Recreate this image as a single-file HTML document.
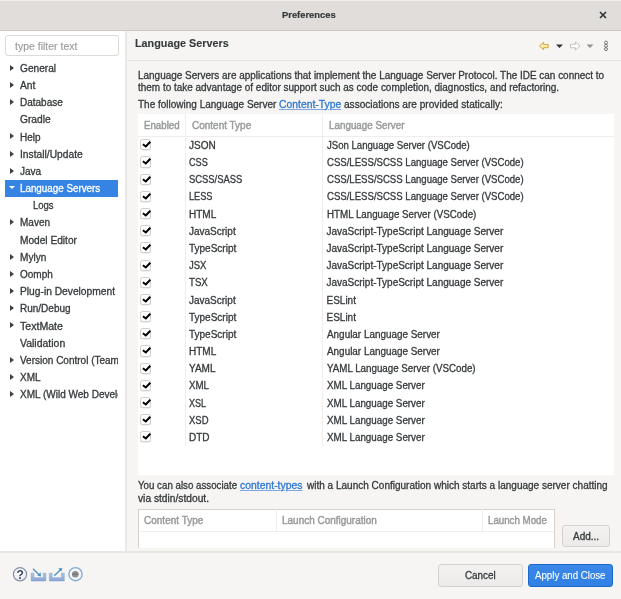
<!DOCTYPE html>
<html><head><meta charset="utf-8">
<style>
html,body{margin:0;padding:0;}
body{width:621px;height:599px;overflow:hidden;position:relative;background:#f6f5f4;
 font-family:"Liberation Sans",sans-serif;font-size:10px;color:#363a3c;will-change:transform;}
.a{position:absolute;}
.t{position:absolute;white-space:nowrap;line-height:11px;-webkit-text-stroke:0.3px currentColor;}
.g{color:#999b9c;-webkit-text-stroke:0.45px currentColor !important;}
.lnk{color:#2f78d2;text-decoration:underline;text-decoration-color:#7fa9e0;}
.tri{position:absolute;width:0;height:0;border-top:3.2px solid transparent;border-bottom:3.2px solid transparent;border-left:4px solid #3e4142;}
.cb{position:absolute;width:11.3px;height:11.1px;border:1px solid #d3cec9;border-radius:2.5px;background:#fff;box-sizing:border-box;box-shadow:0 0.5px 0 #e2dfdc;}
.cb svg{position:absolute;left:0;top:0;}
</style></head><body>
<div class="a" style="left:0;top:0;width:621px;height:31px;background:#e0ddda;border-top:1px solid #f0efed;border-bottom:1px solid #cdc8c3;box-sizing:border-box;"></div>
<div class="t" style="left:282px;top:9px;font-weight:bold;font-size:9.4px;-webkit-text-stroke:0.2px currentColor;">Preferences</div>
<svg class="a" style="left:599px;top:11px" width="8" height="8" viewBox="0 0 8 8"><path d="M1 1L7 7M7 1L1 7" stroke="#2e3436" stroke-width="1.6"/></svg>
<div class="a" style="left:0;top:31px;width:125px;height:519.6px;background:#fff;"></div>
<div class="a" style="left:125px;top:31px;width:2px;height:519.6px;background:#ebe9e7;"></div>
<div class="a" style="left:4.75px;top:35px;width:114px;height:21.2px;border:1.5px solid #dedad6;border-radius:3px;background:#fff;box-sizing:border-box;"></div>
<div class="t " style="left:15px;top:40.50px;color:#9c9c9c;-webkit-text-stroke:0.15px currentColor;transform:scaleX(1.0494);transform-origin:0 0;">type filter text</div>
<div class="a" style="left:0;top:30px;width:118px;height:521px;overflow:hidden;">
<div class="t " style="left:20px;top:32.80px;transform:scaleX(1.0148);transform-origin:0 0;">General</div>
<div class="tri" style="left:9.9px;top:34.60px;"></div>
<div class="t " style="left:20px;top:49.98px;transform:scaleX(1.0260);transform-origin:0 0;">Ant</div>
<div class="tri" style="left:9.9px;top:51.78px;"></div>
<div class="t " style="left:20px;top:67.16px;">Database</div>
<div class="tri" style="left:9.9px;top:68.96px;"></div>
<div class="t " style="left:20px;top:84.34px;transform:scaleX(1.0229);transform-origin:0 0;">Gradle</div>
<div class="t " style="left:20px;top:101.52px;">Help</div>
<div class="tri" style="left:9.9px;top:103.32px;"></div>
<div class="t " style="left:20px;top:118.70px;transform:scaleX(1.0255);transform-origin:0 0;">Install/Update</div>
<div class="tri" style="left:9.9px;top:120.50px;"></div>
<div class="t " style="left:20px;top:135.88px;">Java</div>
<div class="tri" style="left:9.9px;top:137.68px;"></div>
<div class="a" style="left:5px;top:150px;width:113.5px;height:17px;background:#3584e4;"></div>
<div class="t " style="left:20px;top:153.06px;color:#fff;transform:scaleX(0.9814);transform-origin:0 0;">Language Servers</div>
<div class="a" style="left:8.6px;top:155.86px;width:0;height:0;border-left:3.2px solid transparent;border-right:3.2px solid transparent;border-top:3.8px solid #fff;"></div>
<div class="t " style="left:32.6px;top:170.24px;transform:scaleX(0.9501);transform-origin:0 0;">Logs</div>
<div class="t " style="left:20px;top:187.42px;">Maven</div>
<div class="tri" style="left:9.9px;top:189.22px;"></div>
<div class="t " style="left:20px;top:204.60px;transform:scaleX(1.0136);transform-origin:0 0;">Model Editor</div>
<div class="t " style="left:20px;top:221.78px;transform:scaleX(1.0072);transform-origin:0 0;">Mylyn</div>
<div class="tri" style="left:9.9px;top:223.58px;"></div>
<div class="t " style="left:20px;top:238.96px;">Oomph</div>
<div class="tri" style="left:9.9px;top:240.76px;"></div>
<div class="t " style="left:20px;top:256.14px;transform:scaleX(1.0235);transform-origin:0 0;">Plug-in Development</div>
<div class="tri" style="left:9.9px;top:257.94px;"></div>
<div class="t " style="left:20px;top:273.32px;">Run/Debug</div>
<div class="tri" style="left:9.9px;top:275.12px;"></div>
<div class="t " style="left:20px;top:290.50px;transform:scaleX(1.0575);transform-origin:0 0;">TextMate</div>
<div class="tri" style="left:9.9px;top:292.30px;"></div>
<div class="t " style="left:20px;top:307.68px;transform:scaleX(1.0469);transform-origin:0 0;">Validation</div>
<div class="t " style="left:20px;top:324.86px;">Version Control (Team)</div>
<div class="tri" style="left:9.9px;top:326.66px;"></div>
<div class="t " style="left:20px;top:342.04px;">XML</div>
<div class="tri" style="left:9.9px;top:343.84px;"></div>
<div class="t " style="left:20px;top:359.22px;">XML (Wild Web Developer)</div>
<div class="tri" style="left:9.9px;top:361.02px;"></div>
</div>
<div class="t " style="left:134.6px;top:38.00px;font-weight:bold;font-size:10.4px;-webkit-text-stroke:0.1px currentColor;transform:scaleX(1.04);transform-origin:0 0;">Language Servers</div>
<div class="a" style="left:127px;top:60px;width:494px;height:1px;background:#e6e3e0;"></div>
<div class="t " style="left:138px;top:69.60px;transform:scaleX(0.9949);transform-origin:0 0;">Language Servers are applications that implement the Language Server Protocol. The IDE can connect to</div>
<div class="t " style="left:138px;top:82.00px;transform:scaleX(0.9953);transform-origin:0 0;">them to take advantage of editor support such as code completion, diagnostics, and refactoring.</div>
<div class="t " style="left:138px;top:98.60px;transform:scaleX(0.9992);transform-origin:0 0;">The following Language Server</div>
<div class="t lnk" style="left:279.3px;top:98.60px;transform:scaleX(1.0362);transform-origin:0 0;">Content-Type</div>
<div class="t " style="left:343.5px;top:98.60px;transform:scaleX(1.0096);transform-origin:0 0;">associations are provided statically:</div>
<div class="a" style="left:138px;top:114px;width:476px;height:361px;background:#fff;"></div>
<div class="a" style="left:138px;top:135.5px;width:476px;height:1px;background:#f0eeec;"></div>
<div class="a" style="left:185px;top:114px;width:1px;height:331.5px;background:#f0eeec;"></div>
<div class="a" style="left:322px;top:114px;width:1px;height:331.5px;background:#f0eeec;"></div>
<div class="t g" style="left:144px;top:119.80px;transform:scaleX(0.9701);transform-origin:0 0;">Enabled</div>
<div class="t g" style="left:191.8px;top:119.80px;transform:scaleX(0.9984);transform-origin:0 0;">Content Type</div>
<div class="t g" style="left:329px;top:119.80px;transform:scaleX(0.9841);transform-origin:0 0;">Language Server</div>
<div class="cb" style="left:140px;top:139.30px;"><svg width="12" height="12" viewBox="0 0 12 12" style="left:-1px;top:-1px"><path d="M2.9 5.3L5.8 7.5L10.3 2.7" fill="none" stroke="#000" stroke-width="2"/></svg></div>
<div class="t " style="left:189px;top:139.90px;">JSON</div>
<div class="t " style="left:326.5px;top:139.90px;transform:scaleX(0.9586);transform-origin:0 0;">JSon Language Server (VSCode)</div>
<div class="cb" style="left:140px;top:156.48px;"><svg width="12" height="12" viewBox="0 0 12 12" style="left:-1px;top:-1px"><path d="M2.9 5.3L5.8 7.5L10.3 2.7" fill="none" stroke="#000" stroke-width="2"/></svg></div>
<div class="t " style="left:189px;top:157.08px;transform:scaleX(0.9143);transform-origin:0 0;">CSS</div>
<div class="t " style="left:326.5px;top:157.08px;transform:scaleX(0.9585);transform-origin:0 0;">CSS/LESS/SCSS Language Server (VSCode)</div>
<div class="cb" style="left:140px;top:173.66px;"><svg width="12" height="12" viewBox="0 0 12 12" style="left:-1px;top:-1px"><path d="M2.9 5.3L5.8 7.5L10.3 2.7" fill="none" stroke="#000" stroke-width="2"/></svg></div>
<div class="t " style="left:189px;top:174.26px;transform:scaleX(0.9402);transform-origin:0 0;">SCSS/SASS</div>
<div class="t " style="left:326.5px;top:174.26px;transform:scaleX(0.9585);transform-origin:0 0;">CSS/LESS/SCSS Language Server (VSCode)</div>
<div class="cb" style="left:140px;top:190.84px;"><svg width="12" height="12" viewBox="0 0 12 12" style="left:-1px;top:-1px"><path d="M2.9 5.3L5.8 7.5L10.3 2.7" fill="none" stroke="#000" stroke-width="2"/></svg></div>
<div class="t " style="left:189px;top:191.44px;transform:scaleX(0.9151);transform-origin:0 0;">LESS</div>
<div class="t " style="left:326.5px;top:191.44px;transform:scaleX(0.9585);transform-origin:0 0;">CSS/LESS/SCSS Language Server (VSCode)</div>
<div class="cb" style="left:140px;top:208.02px;"><svg width="12" height="12" viewBox="0 0 12 12" style="left:-1px;top:-1px"><path d="M2.9 5.3L5.8 7.5L10.3 2.7" fill="none" stroke="#000" stroke-width="2"/></svg></div>
<div class="t " style="left:189px;top:208.62px;">HTML</div>
<div class="t " style="left:326.5px;top:208.62px;transform:scaleX(0.9756);transform-origin:0 0;">HTML Language Server (VSCode)</div>
<div class="cb" style="left:140px;top:225.20px;"><svg width="12" height="12" viewBox="0 0 12 12" style="left:-1px;top:-1px"><path d="M2.9 5.3L5.8 7.5L10.3 2.7" fill="none" stroke="#000" stroke-width="2"/></svg></div>
<div class="t " style="left:189px;top:225.80px;">JavaScript</div>
<div class="t " style="left:326.5px;top:225.80px;">JavaScript-TypeScript Language Server</div>
<div class="cb" style="left:140px;top:242.38px;"><svg width="12" height="12" viewBox="0 0 12 12" style="left:-1px;top:-1px"><path d="M2.9 5.3L5.8 7.5L10.3 2.7" fill="none" stroke="#000" stroke-width="2"/></svg></div>
<div class="t " style="left:189px;top:242.98px;">TypeScript</div>
<div class="t " style="left:326.5px;top:242.98px;">JavaScript-TypeScript Language Server</div>
<div class="cb" style="left:140px;top:259.56px;"><svg width="12" height="12" viewBox="0 0 12 12" style="left:-1px;top:-1px"><path d="M2.9 5.3L5.8 7.5L10.3 2.7" fill="none" stroke="#000" stroke-width="2"/></svg></div>
<div class="t " style="left:189px;top:260.16px;transform:scaleX(0.9487);transform-origin:0 0;">JSX</div>
<div class="t " style="left:326.5px;top:260.16px;">JavaScript-TypeScript Language Server</div>
<div class="cb" style="left:140px;top:276.74px;"><svg width="12" height="12" viewBox="0 0 12 12" style="left:-1px;top:-1px"><path d="M2.9 5.3L5.8 7.5L10.3 2.7" fill="none" stroke="#000" stroke-width="2"/></svg></div>
<div class="t " style="left:189px;top:277.34px;transform:scaleX(0.9667);transform-origin:0 0;">TSX</div>
<div class="t " style="left:326.5px;top:277.34px;">JavaScript-TypeScript Language Server</div>
<div class="cb" style="left:140px;top:293.92px;"><svg width="12" height="12" viewBox="0 0 12 12" style="left:-1px;top:-1px"><path d="M2.9 5.3L5.8 7.5L10.3 2.7" fill="none" stroke="#000" stroke-width="2"/></svg></div>
<div class="t " style="left:189px;top:294.52px;">JavaScript</div>
<div class="t " style="left:326.5px;top:294.52px;">ESLint</div>
<div class="cb" style="left:140px;top:311.10px;"><svg width="12" height="12" viewBox="0 0 12 12" style="left:-1px;top:-1px"><path d="M2.9 5.3L5.8 7.5L10.3 2.7" fill="none" stroke="#000" stroke-width="2"/></svg></div>
<div class="t " style="left:189px;top:311.70px;">TypeScript</div>
<div class="t " style="left:326.5px;top:311.70px;">ESLint</div>
<div class="cb" style="left:140px;top:328.28px;"><svg width="12" height="12" viewBox="0 0 12 12" style="left:-1px;top:-1px"><path d="M2.9 5.3L5.8 7.5L10.3 2.7" fill="none" stroke="#000" stroke-width="2"/></svg></div>
<div class="t " style="left:189px;top:328.88px;">TypeScript</div>
<div class="t " style="left:326.5px;top:328.88px;transform:scaleX(0.9907);transform-origin:0 0;">Angular Language Server</div>
<div class="cb" style="left:140px;top:345.46px;"><svg width="12" height="12" viewBox="0 0 12 12" style="left:-1px;top:-1px"><path d="M2.9 5.3L5.8 7.5L10.3 2.7" fill="none" stroke="#000" stroke-width="2"/></svg></div>
<div class="t " style="left:189px;top:346.06px;">HTML</div>
<div class="t " style="left:326.5px;top:346.06px;transform:scaleX(0.9907);transform-origin:0 0;">Angular Language Server</div>
<div class="cb" style="left:140px;top:362.64px;"><svg width="12" height="12" viewBox="0 0 12 12" style="left:-1px;top:-1px"><path d="M2.9 5.3L5.8 7.5L10.3 2.7" fill="none" stroke="#000" stroke-width="2"/></svg></div>
<div class="t " style="left:189px;top:363.24px;">YAML</div>
<div class="t " style="left:326.5px;top:363.24px;transform:scaleX(0.9757);transform-origin:0 0;">YAML Language Server (VSCode)</div>
<div class="cb" style="left:140px;top:379.82px;"><svg width="12" height="12" viewBox="0 0 12 12" style="left:-1px;top:-1px"><path d="M2.9 5.3L5.8 7.5L10.3 2.7" fill="none" stroke="#000" stroke-width="2"/></svg></div>
<div class="t " style="left:189px;top:380.42px;transform:scaleX(0.9727);transform-origin:0 0;">XML</div>
<div class="t " style="left:326.5px;top:380.42px;transform:scaleX(0.9801);transform-origin:0 0;">XML Language Server</div>
<div class="cb" style="left:140px;top:397.00px;"><svg width="12" height="12" viewBox="0 0 12 12" style="left:-1px;top:-1px"><path d="M2.9 5.3L5.8 7.5L10.3 2.7" fill="none" stroke="#000" stroke-width="2"/></svg></div>
<div class="t " style="left:189px;top:397.60px;transform:scaleX(0.8994);transform-origin:0 0;">XSL</div>
<div class="t " style="left:326.5px;top:397.60px;transform:scaleX(0.9801);transform-origin:0 0;">XML Language Server</div>
<div class="cb" style="left:140px;top:414.18px;"><svg width="12" height="12" viewBox="0 0 12 12" style="left:-1px;top:-1px"><path d="M2.9 5.3L5.8 7.5L10.3 2.7" fill="none" stroke="#000" stroke-width="2"/></svg></div>
<div class="t " style="left:189px;top:414.78px;transform:scaleX(0.9483);transform-origin:0 0;">XSD</div>
<div class="t " style="left:326.5px;top:414.78px;transform:scaleX(0.9801);transform-origin:0 0;">XML Language Server</div>
<div class="cb" style="left:140px;top:431.36px;"><svg width="12" height="12" viewBox="0 0 12 12" style="left:-1px;top:-1px"><path d="M2.9 5.3L5.8 7.5L10.3 2.7" fill="none" stroke="#000" stroke-width="2"/></svg></div>
<div class="t " style="left:189px;top:431.96px;">DTD</div>
<div class="t " style="left:326.5px;top:431.96px;transform:scaleX(0.9801);transform-origin:0 0;">XML Language Server</div>
<div class="t " style="left:138px;top:480.40px;transform:scaleX(0.9723);transform-origin:0 0;">You can also associate</div>
<div class="t lnk" style="left:240.1px;top:480.40px;transform:scaleX(1.0412);transform-origin:0 0;">content-types</div>
<div class="t " style="left:306.8px;top:480.40px;transform:scaleX(1.0015);transform-origin:0 0;">with a Launch Configuration which starts a language server chatting</div>
<div class="t " style="left:138px;top:493.00px;transform:scaleX(1.0219);transform-origin:0 0;">via stdin/stdout.</div>
<div class="a" style="left:138px;top:508.5px;width:416.5px;height:39.2px;background:#fff;border:1px solid #d6d1cd;border-bottom:none;box-sizing:border-box;"></div>
<div class="a" style="left:139px;top:531px;width:415px;height:1px;background:#f0eeec;"></div>
<div class="a" style="left:275.5px;top:509px;width:1px;height:22px;background:#f0eeec;"></div>
<div class="a" style="left:481.5px;top:509px;width:1px;height:22px;background:#f0eeec;"></div>
<div class="t g" style="left:144.4px;top:514.50px;transform:scaleX(1.0001);transform-origin:0 0;">Content Type</div>
<div class="t g" style="left:281.6px;top:514.50px;transform:scaleX(0.9973);transform-origin:0 0;">Launch Configuration</div>
<div class="t g" style="left:487.5px;top:514.50px;transform:scaleX(0.9720);transform-origin:0 0;">Launch Mode</div>
<div class="a" style="left:562.3px;top:525.3px;width:47.8px;height:22.2px;border:1px solid #d6d1cc;border-radius:3px;background:linear-gradient(#f4f2f1,#edebe9);box-sizing:border-box;"></div>
<div class="t " style="left:573px;top:531.00px;">Add...</div>
<div class="a" style="left:0;top:550.6px;width:621px;height:2px;background:#e8e6e3;"></div>
<div class="a" style="left:0;top:552.6px;width:621px;height:47px;background:#f6f5f4;"></div>
<div class="a" style="left:438.3px;top:564.2px;width:84.6px;height:22.8px;border:1px solid #d6d1cc;border-radius:3px;background:linear-gradient(#f4f2f1,#edebe9);box-sizing:border-box;"></div>
<div class="t " style="left:464.6px;top:569.90px;transform:scaleX(0.9863);transform-origin:0 0;">Cancel</div>
<div class="a" style="left:528px;top:564px;width:85px;height:23px;border:1px solid #1b6acb;border-radius:3px;background:linear-gradient(#3a88e8,#3081e3);box-sizing:border-box;"></div>
<div class="t " style="left:535px;top:569.90px;color:#fff;-webkit-text-stroke:0.1px #fff;transform:scaleX(0.9682);transform-origin:0 0;">Apply and Close</div>
<svg class="a" style="left:0;top:560px" width="100" height="30" viewBox="0 560 100 30">
<defs><linearGradient id="tg" x1="0" y1="0" x2="0" y2="1"><stop offset="0" stop-color="#b4c8e6"/><stop offset="1" stop-color="#8aa6d4"/></linearGradient>
<radialGradient id="qg" cx="0.5" cy="0.35" r="0.7"><stop offset="0" stop-color="#ffffff"/><stop offset="1" stop-color="#e6e8ee"/></radialGradient></defs>
<circle cx="20" cy="574.3" r="6.6" fill="url(#qg)" stroke="#8790a6" stroke-width="1.2"/>
<text x="20.2" y="578.9" text-anchor="middle" font-family="Liberation Sans" font-weight="bold" font-size="12" fill="#3b4766">?</text>
<path d="M31.2 573.2H33.8V577.8H43.2V573.2H45.8V580.9H31.2Z" fill="url(#tg)" stroke="#7f9ccc" stroke-width="0.6"/>
<path d="M33 568.8L39.6 575.2" stroke="#4d92c4" stroke-width="1.3" fill="none"/>
<path d="M41 576.6L37.2 575.6L40.6 572.2Z" fill="#4d92c4"/>
<path d="M49.4 573.2H52V577.8H61.6V573.2H64.2V580.9H49.4Z" fill="url(#tg)" stroke="#7f9ccc" stroke-width="0.6"/>
<path d="M54.2 575.8L61 569.2" stroke="#4d92c4" stroke-width="1.3" fill="none"/>
<path d="M62.4 567.9L61.4 571.6L58.2 568.6Z" fill="#4d92c4"/>
<circle cx="75.5" cy="574.2" r="6.6" fill="#f4f8fc" stroke="#86acd6" stroke-width="1.4"/>
<circle cx="75.3" cy="574.2" r="3.3" fill="#8e8e8e"/>
<rect x="72.2" y="573.6" width="6.2" height="1.2" fill="#777"/>
</svg>
<svg class="a" style="left:537px;top:39px" width="75" height="14" viewBox="0 0 75 14">
<path d="M2.4 7L6.6 3.3V5.4H11.2V8.7H6.6V10.7Z" fill="#fbeeb5" stroke="#d7a235" stroke-width="1"/>
<path d="M19 5.5H26L22.5 9Z" fill="#2e3436"/>
<path d="M43 7L38.5 3V5.2H33.5V8.8H38.5V11Z" fill="#fff" stroke="#c0c0c0" stroke-width="1"/>
<path d="M49.5 5.5H56.5L53 9Z" fill="#8e9192"/>
<circle cx="69" cy="3.6" r="1.5" fill="none" stroke="#6c6c6c" stroke-width="0.9"/>
<circle cx="69" cy="6.85" r="1.5" fill="none" stroke="#6c6c6c" stroke-width="0.9"/>
<circle cx="69" cy="10.1" r="1.5" fill="none" stroke="#6c6c6c" stroke-width="0.9"/>
</svg>
</body></html>
